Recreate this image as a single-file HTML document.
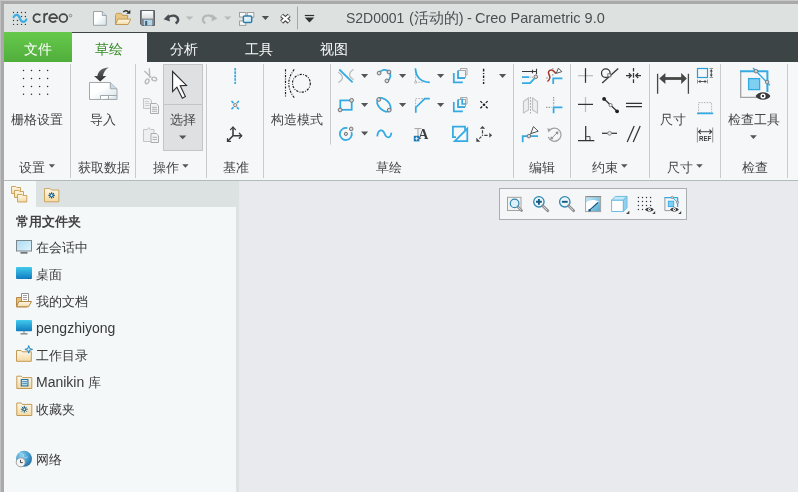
<!DOCTYPE html>
<html><head><meta charset="utf-8">
<style>
*{margin:0;padding:0;box-sizing:border-box}
html,body{width:798px;height:492px;overflow:hidden;background:#a9a9a9;font-family:"Liberation Sans",sans-serif;position:relative}
.a{position:absolute}
.t{position:absolute;white-space:nowrap;line-height:1;will-change:transform}
.tab{color:#fbfbfb;font-size:14px}
.rl{color:#454545;font-size:13px}
.li{color:#3a3a3a;font-size:13px}
svg{position:absolute;left:0;top:0}
</style></head><body>
<div class="a" style="left:0;top:0;width:798px;height:1px;background:#c8c8c8"></div>
<div class="a" style="left:0;top:0;width:1px;height:492px;background:#c0c0c0"></div>
<div class="a" style="left:4px;top:4px;width:794px;height:28px;background:#dde2e1"></div>
<div class="a" style="left:4px;top:32px;width:794px;height:30px;background:#3c4446"></div>
<div class="a" style="left:4px;top:32px;width:68px;height:30px;background:linear-gradient(#66c94b,#50ae3b)"></div>
<div class="a" style="left:72px;top:33px;width:75px;height:29px;background:#f6f7f9"></div>
<div class="a" style="left:4px;top:62px;width:794px;height:118px;background:#f6f7f9"></div>
<div class="a" style="left:4px;top:180px;width:794px;height:1px;background:#b2bbbb"></div>
<div class="a" style="left:4px;top:181px;width:232px;height:311px;background:#f5f8f9"></div>
<div class="a" style="left:4px;top:181px;width:232px;height:26px;background:#dce1e1"></div>
<div class="a" style="left:4px;top:181px;width:32px;height:26px;background:#f5f8f9"></div>
<div class="a" style="left:236px;top:181px;width:3px;height:311px;background:#dce1e1"></div>
<div class="a" style="left:239px;top:181px;width:559px;height:311px;background:#e8eaed"></div>
<div class="a" style="left:163px;top:64px;width:40px;height:87px;background:#dfe0e1;border:1px solid #c3c5c7"></div>
<div class="a" style="left:164px;top:104px;width:38px;height:1px;background:#c3c5c7"></div>
<div class="a" style="left:499px;top:188px;width:188px;height:32px;border:1px solid #a9aeb1;background:#f5f6f8"></div>
<!-- title text -->
<div class="t" style="left:346px;top:11px;font-size:14px;color:#4a4f50">S2D0001</div>
<div class="t" style="left:409px;top:11px;font-size:14.5px;color:#4a4f50">(活动的)</div>
<div class="t" style="left:467px;top:11px;font-size:14.5px;color:#4a4f50">-</div>
<div class="t" style="left:475px;top:11px;font-size:14.5px;color:#4a4f50">Creo Parametric 9.0</div>

<!-- tabs -->
<div class="t tab" style="left:24px;top:42px;color:#fff">文件</div>
<div class="t tab" style="left:95px;top:42px;color:#348a24">草绘</div>
<div class="t tab" style="left:170px;top:42px">分析</div>
<div class="t tab" style="left:245px;top:42px">工具</div>
<div class="t tab" style="left:320px;top:42px">视图</div>

<!-- ribbon labels -->
<div class="t rl" style="left:11px;top:113px">栅格设置</div>
<div class="t rl" style="left:90px;top:113px">导入</div>
<div class="t rl" style="left:170px;top:113px">选择</div>
<div class="t rl" style="left:271px;top:113px">构造模式</div>
<div class="t rl" style="left:660px;top:113px">尺寸</div>
<div class="t rl" style="left:728px;top:113px">检查工具</div>

<div class="t rl" style="left:19px;top:161px">设置</div>
<div class="t rl" style="left:78px;top:161px">获取数据</div>
<div class="t rl" style="left:153px;top:161px">操作</div>
<div class="t rl" style="left:223px;top:161px">基准</div>
<div class="t rl" style="left:376px;top:161px">草绘</div>
<div class="t rl" style="left:529px;top:161px">编辑</div>
<div class="t rl" style="left:592px;top:161px">约束</div>
<div class="t rl" style="left:667px;top:161px">尺寸</div>
<div class="t rl" style="left:742px;top:161px">检查</div>

<!-- list -->
<div class="t li" style="left:16px;top:215px;font-weight:bold;color:#444">常用文件夹</div>
<div class="t li" style="left:36px;top:241px">在会话中</div>
<div class="t li" style="left:36px;top:268px">桌面</div>
<div class="t li" style="left:36px;top:295px">我的文档</div>
<div class="t li" style="left:36px;top:321px;font-size:14px">pengzhiyong</div>
<div class="t li" style="left:36px;top:349px">工作目录</div>
<div class="t li" style="left:36px;top:375px"><span style="font-size:14px">Manikin</span> 库</div>
<div class="t li" style="left:36px;top:403px">收藏夹</div>
<div class="t li" style="left:36px;top:453px">网络</div>
<svg width="798" height="492" viewBox="0 0 798 492">
<defs>
<linearGradient id="gpaper" x1="0" y1="0" x2="1" y2="1"><stop offset="0.4" stop-color="#ffffff"/><stop offset="1" stop-color="#d3e3ea"/></linearGradient>
<linearGradient id="gfold" x1="0" y1="0" x2="0" y2="1"><stop offset="0" stop-color="#fff9ea"/><stop offset="1" stop-color="#f3d9a2"/></linearGradient>
<linearGradient id="garrow" x1="0" y1="0" x2="0" y2="1"><stop offset="0" stop-color="#666"/><stop offset="1" stop-color="#2e2e2e"/></linearGradient>
<linearGradient id="gscr" x1="0" y1="0" x2="1" y2="1"><stop offset="0" stop-color="#a8dcf4"/><stop offset="1" stop-color="#e2f4fb"/></linearGradient>
<linearGradient id="gdesk" x1="0" y1="0" x2="0" y2="1"><stop offset="0" stop-color="#41cbee"/><stop offset="1" stop-color="#117cc0"/></linearGradient>
<radialGradient id="gglobe" cx="0.35" cy="0.3" r="0.8"><stop offset="0" stop-color="#8fd3f0"/><stop offset="0.6" stop-color="#3d95c8"/><stop offset="1" stop-color="#24679a"/></radialGradient>
<linearGradient id="grep" x1="0" y1="0" x2="1" y2="1"><stop offset="0" stop-color="#9fd6ee"/><stop offset="1" stop-color="#1e7fb3"/></linearGradient>
</defs>

<!-- ===== title bar ===== -->
<g fill="#3a3a3a">
<circle cx="13.5" cy="12.5" r="0.7"/><circle cx="17.45" cy="12.5" r="0.7"/><circle cx="21.5" cy="12.5" r="0.7"/><circle cx="25.4" cy="12.5" r="0.7"/>
<circle cx="21.5" cy="16.5" r="0.7"/><circle cx="25.4" cy="16.5" r="0.7"/>
<circle cx="13.5" cy="20.5" r="0.7"/><circle cx="17.45" cy="20.5" r="0.7"/>
<circle cx="13.5" cy="24.4" r="0.7"/><circle cx="17.45" cy="24.4" r="0.7"/><circle cx="21.5" cy="24.4" r="0.7"/><circle cx="25.4" cy="24.4" r="0.7"/>
</g>
<path d="M13.6,17.2C14.8,14.2 18.4,13.6 20,18.6C21.6,23 25.2,22.4 26.4,19.4" fill="none" stroke="#3aade4" stroke-width="2.2" stroke-linecap="round"/>
<g fill="none" stroke="#474747" stroke-width="1.75">
<path d="M40.4,15.4A4,4 0 1 0 40.4,20.7"/>
<path d="M44.2,13.2V22.9M44.2,17.6C44.2,14.9 45.8,13.7 48,13.7"/>
<path d="M49.2,18.05H57.1A3.95,3.95 0 1 0 56.2,20.6"/>
<circle cx="63.35" cy="18.05" r="3.95"/>
</g>
<circle cx="70.5" cy="15.6" r="1.3" fill="none" stroke="#777" stroke-width="0.8"/>

<!-- new -->
<path d="M93.5,11.5H102.3L106.3,15.5V25.3H93.5Z" fill="url(#gpaper)" stroke="#9ea3a6"/>
<path d="M102.3,11.5V15.5H106.3" fill="#cfe2ec" stroke="#9ea3a6"/>
<!-- open -->
<path d="M115.5,24.5V15.5C115.5,13.8 116.3,13.3 117.5,13.3H120.5C121.5,13.3 122,14 122.3,15.4H127.6V24.5Z" fill="#e9c681" stroke="#c29a55"/>
<path d="M117.9,19.1H130.8L128.1,24.5H115.5Z" fill="url(#gfold)" stroke="#c29a55"/>
<path d="M123.2,12C124.6,10.6 126.6,10.4 128.4,11.8" fill="none" stroke="#2f2f2f" stroke-width="1.6"/>
<path d="M126.3,13.7H130.3V9.7Z" fill="#2f2f2f"/>
<!-- save -->
<linearGradient id="gsave" x1="0" y1="0" x2="0" y2="1"><stop offset="0" stop-color="#ffffff"/><stop offset="1" stop-color="#d9dcdd"/></linearGradient>
<path d="M140.5,10.5H154.5V25.5H142L140.5,24Z" fill="#80868a" stroke="#5d6367"/>
<rect x="142" y="11" width="11" height="7.6" fill="url(#gsave)"/>
<rect x="143.8" y="19.8" width="8.4" height="5.7" fill="#aed6ec"/>
<rect x="145.2" y="21" width="2" height="4.5" fill="#4e5961"/>
<!-- undo -->
<path d="M167.5,17.8C170.5,14.8 176.8,14.6 178,18.8C178.6,21 177.3,22.4 175.6,23.4" fill="none" stroke="#474d50" stroke-width="2.4"/>
<path d="M163.6,19.2L168.6,14.2L170,21.4Z" fill="#474d50"/>
<path d="M185.8,16.4H193.3L189.55,20Z" fill="#b6baba"/>
<!-- redo -->
<path d="M213.5,17.6C210.5,14.8 204.2,14.4 203,18.6C202.4,20.8 203.7,22.4 205.4,23.4" fill="none" stroke="#b4b8b9" stroke-width="2.2"/>
<path d="M217.4,18.6L212,14.3L211.6,21.6Z" fill="#b4b8b9"/>
<path d="M224,16.4H231.5L227.75,20Z" fill="#b6baba"/>
<!-- windows -->
<linearGradient id="gwin" x1="0" y1="0" x2="1" y2="1"><stop offset="0" stop-color="#ffffff"/><stop offset="1" stop-color="#bfe2f3"/></linearGradient>
<g fill="#f7f7f7" stroke="#a0a0a0">
<rect x="239.5" y="12.5" width="6.3" height="4.5"/>
<rect x="247.3" y="12.5" width="6.5" height="4.8"/>
<rect x="239.5" y="21" width="6.3" height="4.4"/>
</g>
<rect x="243.4" y="15.9" width="8.3" height="6.6" rx="1.3" fill="url(#gwin)" stroke="#2f7ea6" stroke-width="1.5"/>
<path d="M261.8,15.9H269L265.4,19.9Z" fill="#505050"/>
<!-- close x -->
<path d="M281.6,15.4L289.2,22M289.2,15.4L281.6,22" stroke="#444" stroke-width="4.4"/>
<path d="M281.9,15.7L288.9,21.7M288.9,15.7L281.9,21.7" stroke="#fff" stroke-width="2.2"/>
<path d="M297.5,6.5V29.5" stroke="#a3a8a9"/>
<path d="M304.8,15.5H314.2" stroke="#303030" stroke-width="1.2"/>
<path d="M304.8,17.6H314.2L309.5,22.4Z" fill="#303030"/>
<!-- ===== ribbon separators ===== -->
<g stroke="#c8cccd" stroke-width="1">
<path d="M70.5,64V178M135.5,64V178M206.5,64V178M263.5,64V178M330.5,64V144.5M513.5,64V178M570.5,64V178M649.5,64V178M720.5,64V178M787.5,64V178"/>
</g>

<!-- grid dots -->
<g fill="#2c2c2c">
<circle cx="23.5" cy="70.6" r="0.75"/><circle cx="31.5" cy="70.6" r="0.75"/><circle cx="39.6" cy="70.6" r="0.75"/><circle cx="47.6" cy="70.6" r="0.75"/>
<circle cx="23.5" cy="78.5" r="0.75"/><circle cx="31.5" cy="78.5" r="0.75"/><circle cx="39.6" cy="78.5" r="0.75"/><circle cx="47.6" cy="78.5" r="0.75"/>
<circle cx="23.5" cy="86.5" r="0.75"/><circle cx="31.5" cy="86.5" r="0.75"/><circle cx="39.6" cy="86.5" r="0.75"/><circle cx="47.6" cy="86.5" r="0.75"/>
<circle cx="23.5" cy="94.3" r="0.75"/><circle cx="31.5" cy="94.3" r="0.75"/><circle cx="39.6" cy="94.3" r="0.75"/><circle cx="47.6" cy="94.3" r="0.75"/>
</g>

<!-- import -->
<path d="M89.5,82.5H110.3L117,88.8V99.5H89.5Z" fill="url(#gpaper)" stroke="#a3a8aa"/>
<path d="M110.3,82.5V88.8H117" fill="#c9dde8" stroke="#a3a8aa"/>
<path d="M100.5,99.5V95.5H117M108.5,95.5V99.5" fill="#fff" stroke="#a3a8aa"/>
<path d="M108.8,67.6C102.8,67.8 98.2,70.8 97.4,76H94L100.2,81.6L106.3,76H102.9C103.6,72.2 105.6,69.4 108.8,67.6Z" fill="url(#garrow)"/>

<!-- scissors / copy / paste -->
<g fill="none" stroke="#b6babb" stroke-width="1.4">
<path d="M149.3,68.2L149.8,77.6M144.4,71L151.2,77.4"/>
<ellipse cx="147.2" cy="81.3" rx="1.7" ry="2.5" transform="rotate(25 147.2 81.3)"/>
<ellipse cx="154.3" cy="79" rx="2.5" ry="1.7" transform="rotate(20 154.3 79)"/>
</g>
<g stroke-width="1">
<path d="M143.5,98.5H149.5L151.5,100.5V108.5H143.5Z" fill="#eeefef" stroke="#c3c6c7"/>
<path d="M145,101.5H149M145,103.5H149.5M145,105.5H149.5" stroke="#cfd2d3"/>
<path d="M150.5,103.5H156.3L158.5,105.7V113.5H150.5Z" fill="#f2f3f3" stroke="#a9adae"/>
<path d="M152,107.3H157M152,109.3H157M152,111.3H157" stroke="#b1b5b6"/>
<path d="M143.5,129.5H147.3L148.8,127.5L150.3,129.5H154V141.5H143.5Z" fill="#eeefef" stroke="#c3c6c7"/>
<path d="M151,133.5H156.3L158.5,135.7V142.5H151Z" fill="#f2f3f3" stroke="#a9adae"/>
<path d="M152.5,137.3H157M152.5,139.5H157" stroke="#b1b5b6"/>
</g>

<!-- cursor -->
<path d="M172.6,71.5V91.6L176.9,87.2L182.3,98.2L185.4,96.4L180.2,85.8L186.5,85.4Z" fill="#fff" stroke="#2e2e2e" stroke-width="1.15" stroke-linejoin="miter"/>
<path d="M179,135.4H186.4L182.7,139.3Z" fill="#555"/>

<!-- group label triangles -->
<g fill="#555">
<path d="M48.8,164.3H55L51.9,167.8Z"/>
<path d="M182.2,164.3H188.6L185.4,167.8Z"/>
<path d="M621,164.3H627.6L624.3,167.8Z"/>
<path d="M696.2,164.3H702.8L699.5,167.8Z"/>
<path d="M750,135.2H756.8L753.4,138.9Z"/>
</g>

<!-- datum -->
<path d="M235.2,67.9V84.1" stroke="#33aae2" stroke-width="1.7" stroke-dasharray="2.6 0.85"/>
<path d="M231.5,101L233.6,103.1M238.9,101L236.8,103.1M231.5,109.2L233.6,107.1M238.9,109.2L236.8,107.1" stroke="#33aae2" stroke-width="1.6"/>
<circle cx="235.2" cy="105.1" r="1.6" fill="#e5e5e5" stroke="#777" stroke-width="0.9"/>
<g stroke="#3d3d3d" stroke-width="1.6" fill="none" stroke-linecap="round" stroke-linejoin="round">
<path d="M233,135.7V127.3M233,135.7H241.4M233,135.7L227.6,141.2"/>
<path d="M230.5,129.6L233,127.1L235.5,129.6M239.3,133.2L241.7,135.7L239.3,138.2M227.5,138.6V141.4H230.5" stroke-width="1.3"/>
</g>
<!-- construction mode -->
<g fill="none" stroke="#1e1e1e" stroke-width="1.15" stroke-dasharray="2.2 1.3 0.9 1.3">
<path d="M285.5,69.3V97.6"/>
<path d="M294.2,69.4Q283.4,83.5 294.2,97.6"/>
<circle cx="301.4" cy="83.3" r="8.9"/>
</g>
<!-- ===== sketch group ===== -->
<g fill="#555">
<path d="M361,73.9H368.2L364.6,77.9Z"/><path d="M399,73.9H406.2L402.6,77.9Z"/><path d="M437,73.9H444.2L440.6,77.9Z"/><path d="M499,73.9H506.2L502.6,77.9Z"/>
<path d="M361,103.1H368.2L364.6,107.1Z"/><path d="M399,103.1H406.2L402.6,107.1Z"/><path d="M437,103.1H444.2L440.6,107.1Z"/>
<path d="M361,131.6H368.2L364.6,135.6Z"/>
</g>
<!-- line -->
<path d="M338.3,72.2Q346.5,77.5 338.3,82.6M353.6,69.2Q345.6,74.5 353.6,79.8" fill="none" stroke="#b9b9b9" stroke-width="1.2"/>
<path d="M339.3,69.5L352.6,82.4" stroke="#33aae2" stroke-width="1.75"/>
<!-- 3pt arc -->
<path d="M379.3,73A5.9,5.9 0 1 1 387.2,81" fill="none" stroke="#33aae2" stroke-width="1.75"/>
<g fill="#d9d9d9" stroke="#666" stroke-width="0.9">
<circle cx="379.1" cy="73.1" r="1.9"/><circle cx="389" cy="72" r="1.9"/><circle cx="386.9" cy="80.9" r="1.9"/>
</g>
<!-- rectangle -->
<rect x="340.3" y="100.4" width="11.4" height="9.4" fill="none" stroke="#33aae2" stroke-width="1.75"/>
<!-- ellipse -->
<ellipse cx="383.9" cy="104.85" rx="8.3" ry="5.1" transform="rotate(45 383.9 104.8)" fill="none" stroke="#33aae2" stroke-width="1.75"/>
<!-- circle -->
<path d="M351.5,132A6,6 0 1 1 347.4,128.2" fill="none" stroke="#33aae2" stroke-width="1.75"/>
<g fill="#d9d9d9" stroke="#666" stroke-width="0.9">
<circle cx="351.6" cy="100.3" r="1.9"/><circle cx="340.1" cy="109.9" r="1.9"/>
<circle cx="378.8" cy="99.5" r="1.9"/><circle cx="389.2" cy="110.1" r="1.9"/>
<circle cx="345.9" cy="133.9" r="1.6"/><circle cx="351.2" cy="128.9" r="1.8"/>
</g>
<!-- spline -->
<path d="M377.2,136.3C378.2,129.3 382.6,128.6 384.5,133.5C386.4,138.4 390.6,139 391.4,132.6" fill="none" stroke="#33aae2" stroke-width="1.75"/>
<!-- fillet -->
<path d="M415.6,71V82.3H423" fill="none" stroke="#a9a9a9" stroke-width="0.9" stroke-dasharray="1.6 1.2"/>
<circle cx="415.6" cy="82.3" r="1" fill="#fff" stroke="#999" stroke-width="0.7"/>
<path d="M415.4,68.3Q416.2,82 429.8,82.3" fill="none" stroke="#33aae2" stroke-width="1.75"/>
<!-- chamfer -->
<path d="M415.6,107V98.6H424.5" fill="none" stroke="#a9a9a9" stroke-width="0.9" stroke-dasharray="1.6 1.2"/>
<path d="M415.8,112.8V107.5L424.8,98.6H429.8" fill="none" stroke="#33aae2" stroke-width="1.75"/>
<!-- offset -->
<g fill="none" stroke="#a9a9a9" stroke-width="1">
<path d="M460.5,70.5V68.5H467V75H465.5"/><rect x="458.5" y="70.5" width="7" height="7"/>
</g>
<path d="M453.8,73V82.3H462.8M458,70.6V78.1H465" fill="none" stroke="#33aae2" stroke-width="1.75"/>
<!-- thicken -->
<g fill="none" stroke="#a9a9a9" stroke-width="1">
<path d="M460.5,99.5V97.5H467V104H465.5"/><rect x="458.5" y="99.5" width="7" height="7"/>
</g>
<path d="M453.8,102V111.3H462.8M458,99.6V107.1H465M462.2,98.5V104H466" fill="none" stroke="#33aae2" stroke-width="1.7"/>
<!-- text -->
<path d="M414.5,128.6H421.5M418,128.6V136.5" stroke="#9a9a9a" stroke-width="0.9"/>
<text x="418.3" y="139" font-family="Liberation Serif" font-weight="bold" font-size="14" fill="#3e3e3e">A</text>
<rect x="413.8" y="135.8" width="5.6" height="5.6" fill="#1f7bb5"/>
<path d="M414.8,138.6H418.4M416.6,136.8V140.4" stroke="#fff" stroke-width="0.8"/>
<!-- palette / square -->
<path d="M456,137.2H452.9V126.7H465V130" fill="none" stroke="#33aae2" stroke-width="1.75"/>
<path d="M454.8,141.1L467.3,128.6V141.1Z" fill="none" stroke="#33aae2" stroke-width="1.75" stroke-linejoin="miter"/>
<!-- coord sys -->
<g stroke="#444" stroke-width="1.2" fill="none">
<path d="M482.5,130.2V133.6M484.3,135.3H487.6M481.3,136.6L479.3,138.6"/>
</g>
<g fill="#444">
<circle cx="482.5" cy="135.3" r="0.7"/>
<path d="M482.5,126L479.8,128.8H485.2Z"/>
<path d="M492.1,135.3L489.3,132.8V137.8Z"/>
<path d="M476.3,141.7V137.7L480.3,141.7Z"/>
</g>
<!-- centerline -->
<path d="M483.6,68.8V84" stroke="#1e1e1e" stroke-width="1.4" stroke-dasharray="2.6 1.5 1 1.5"/>
<!-- point -->
<path d="M480.4,101.1L482.2,102.9M487.6,101.1L485.8,102.9M480.4,108.3L482.2,106.5M487.6,108.3L485.8,106.5" stroke="#1e1e1e" stroke-width="1.3"/>
<circle cx="484" cy="104.7" r="1.3" fill="#1e1e1e"/>
<!-- ===== edit group ===== -->
<!-- trim -->
<path d="M522,71.5H536.5M536.5,68.8V74.2M532.5,69.8V73.2" stroke="#3a3a3a" stroke-width="1.1"/>
<path d="M522,77.2H529M522,83H530L534.6,78.4" fill="none" stroke="#33aae2" stroke-width="1.75"/>
<path d="M529.5,77.2H533" stroke="#999" stroke-width="1" stroke-dasharray="1.2 1"/>
<circle cx="535.8" cy="76.8" r="1.8" fill="#d9d9d9" stroke="#666" stroke-width="0.9"/>
<!-- divide -->
<path d="M547.4,81.5C550,79.5 550.5,77 549,74.5C547.5,72 549,70 551.5,70C553.5,70 554.5,72.5 556,73.5" fill="none" stroke="#a8382c" stroke-width="1.5"/>
<path d="M556.2,73.4L558.4,68.2L561.8,71.6Z" fill="#fff" stroke="#444" stroke-width="0.9" stroke-linejoin="round"/>
<path d="M553.2,84V78.4H562.4" fill="none" stroke="#33aae2" stroke-width="1.75"/>
<g fill="#aaa"><rect x="552" y="68.1" width="1.5" height="1.5"/><rect x="546.2" y="77.3" width="1.5" height="1.5"/><rect x="552" y="74.2" width="1.5" height="1.5"/></g>
<!-- mirror -->
<g fill="#eeefef" stroke="#c1c4c5" stroke-width="1.2">
<path d="M523.5,101.5L528.5,98V110L523.5,113Z"/>
<path d="M532.5,98L537.5,101.5V113L532.5,110Z"/>
</g>
<path d="M530.5,97V113.5" stroke="#a0a0a0" stroke-width="0.9" stroke-dasharray="1.8 1.2"/>
<!-- corner -->
<path d="M553.6,97V105.6M546,107.4H551.6" stroke="#a0a0a0" stroke-width="1.3" stroke-dasharray="1.5 1.1"/>
<path d="M553.6,113.2V107.4H562.4" fill="none" stroke="#33aae2" stroke-width="1.75"/>
<!-- rotate-resize -->
<path d="M522.7,142.2V136.1H527M530.8,136.1H538" fill="none" stroke="#33aae2" stroke-width="1.75"/>
<path d="M529,136L531,133.2" stroke="#555" stroke-width="0.9"/>
<path d="M530.8,133.6L533.4,126.6L538.2,131.2Z" fill="#fff" stroke="#3a3a3a" stroke-width="0.9" stroke-linejoin="round"/>
<circle cx="528.9" cy="136.1" r="1.8" fill="#d9d9d9" stroke="#666" stroke-width="0.9"/>
<!-- rotate -->
<path d="M549.6,130.2A6.6,6.6 0 1 1 548.3,137" fill="none" stroke="#a0a0a0" stroke-width="1.2"/>
<path d="M547.3,128.3L551.6,129.3L548.4,132.6Z" fill="#a0a0a0"/>
<path d="M551.2,138.7L557.6,132.3" stroke="#8f8f8f" stroke-width="1"/>
<path d="M550.3,139.6L550.9,136.3L553.6,139Z M558.5,131.4L557.9,134.7L555.2,132Z" fill="#8f8f8f"/>

<!-- ===== constraints ===== -->
<g stroke-width="1.25" fill="none">
<path d="M578,75.7H593" stroke="#bdbdbd"/>
<path d="M585.5,68.2V82.8" stroke="#333"/>
<path d="M585.5,97V112" stroke="#bdbdbd"/>
<path d="M578,104.4H593" stroke="#333"/>
<circle cx="605.8" cy="73.2" r="4.3" stroke="#333"/>
<path d="M602.2,83L618.2,68.5" stroke="#333"/>
<path d="M633.5,68.1V71.6M633.5,73V77.8M633.5,79.2V82.9" stroke="#333"/>
<path d="M626,75.6H630.5M641,75.6H636.3" stroke="#333"/>
<path d="M604.2,99L617,111.2" stroke="#333"/>
<path d="M626,103.3H642M626,106.6H642" stroke="#333"/>
<path d="M585.7,126V140.6M578,140.6H594.3" stroke="#333"/>
<path d="M586.2,136.6H590V140.3" stroke="#333" stroke-width="0.9"/>
<path d="M602,133.3H617" stroke="#333"/>
<path d="M627.2,142L634.2,126M633.2,142L640.2,126" stroke="#333"/>
</g>
<path d="M628.8,73.2L631.2,75.6L628.8,78M638.2,73.2L635.8,75.6L638.2,78" fill="none" stroke="#333" stroke-width="1.3"/>
<rect x="607.8" y="73.8" width="3" height="3" fill="#eee" stroke="#666" stroke-width="0.8"/>
<circle cx="604.1" cy="98.9" r="1.9" fill="#1f1f1f"/><circle cx="617.1" cy="111.3" r="1.9" fill="#1f1f1f"/>
<circle cx="610.6" cy="105.1" r="1.6" fill="#f0f0f0" stroke="#666" stroke-width="0.8"/>
<circle cx="609.6" cy="133.3" r="1.9" fill="#e6e6e6" stroke="#777" stroke-width="0.8"/>

<!-- ===== dimension ===== -->
<path d="M657.6,73.8V93.8M688.4,73.8V93.8" stroke="#474747" stroke-width="1.3"/>
<path d="M664.5,78.5H682" stroke="#474747" stroke-width="2.8"/>
<path d="M659.2,78.5L665.4,73.1V84Z M686.9,78.5L681.2,73.1V84Z" fill="#474747"/>
<rect x="697.5" y="68.5" width="10" height="9" fill="none" stroke="#2a9fd6" stroke-width="1.2"/>
<path d="M709.5,68.5H713M709.5,77.5H713M697.5,79.5V83.5M707.5,79.5V83.5" stroke="#888" stroke-width="0.9"/>
<path d="M711.3,70V76M699,81.5H706" stroke="#444" stroke-width="0.9"/>
<path d="M711.3,68.9L709.8,71.4H712.8ZM711.3,77.1L709.8,74.6H712.8ZM698,81.5L700.5,80V83ZM707,81.5L704.5,80V83Z" fill="#444"/>
<rect x="698.6" y="102.6" width="13" height="10" fill="none" stroke="#b0b0b0" stroke-width="0.9" stroke-dasharray="1.6 1.1"/>
<path d="M697,113.4H713.2" stroke="#33aae2" stroke-width="1.7"/>
<path d="M697.4,127.5V142.5M712.7,127.5V142.5" stroke="#8a8a8a" stroke-width="0.9"/>
<path d="M699,131.7H711" stroke="#333" stroke-width="0.9"/>
<path d="M700.8,129.6L698.6,131.7L700.8,133.8M709.4,129.6L711.6,131.7L709.4,133.8" fill="none" stroke="#333" stroke-width="1.1"/>
<text x="699" y="141.3" font-family="Liberation Sans" font-weight="bold" font-size="7.2" fill="#3a3a3a" textLength="12.2" lengthAdjust="spacingAndGlyphs">REF</text>

<!-- ===== inspect ===== -->
<path d="M740.7,71.2V97.3H757" fill="none" stroke="#a3a3a3" stroke-width="1.3"/>
<path d="M740,71.3H767.4M767.4,70.5V92" fill="none" stroke="#33aae2" stroke-width="2"/>
<rect x="748.6" y="78.6" width="11" height="11" fill="#7fcff3" stroke="#33aae2" stroke-width="1.3"/>
<path d="M753,68L769.8,85.2" stroke="#33aae2" stroke-width="1.5"/>
<circle cx="756" cy="71.2" r="1.8" fill="#d0d0d0" stroke="#777" stroke-width="0.9"/>
<circle cx="767.1" cy="82.1" r="1.8" fill="#d0d0d0" stroke="#777" stroke-width="0.9"/>
<path d="M755.6,96C758.2,90.9 767.8,90.9 770.4,96C767.8,101.1 758.2,101.1 755.6,96Z" fill="#3b3b3b"/>
<circle cx="763" cy="96" r="2.6" fill="#fff"/><circle cx="763" cy="96" r="1.1" fill="#111"/>
<!-- ===== view toolbar ===== -->
<rect x="507.5" y="197.3" width="13.5" height="13.2" fill="#f3f3f3" stroke="#a2a2a2"/>
<circle cx="514.6" cy="203.4" r="4.3" fill="#def1fa" stroke="#2f86b0" stroke-width="1.2"/>
<path d="M517.8,206.7L521.6,210.6" stroke="#8a8f92" stroke-width="2.6" stroke-linecap="round"/><path d="M518.3,207.2L521.2,210.1" stroke="#e2e4e5" stroke-width="0.9"/>
<circle cx="538.9" cy="201.8" r="5.2" fill="#e9f6fc" stroke="#2f86b0" stroke-width="1.3"/>
<path d="M536,201.8H541.8M538.9,198.9V204.7" stroke="#145a84" stroke-width="1.9"/>
<path d="M542.7,205.8L547.8,210.8" stroke="#8a8f92" stroke-width="2.7" stroke-linecap="round"/><path d="M543.3,206.4L547.3,210.3" stroke="#e2e4e5" stroke-width="0.9"/>
<circle cx="564.8" cy="201.8" r="5.2" fill="#e9f6fc" stroke="#2f86b0" stroke-width="1.3"/>
<path d="M561.9,201.8H567.7" stroke="#145a84" stroke-width="1.9"/>
<path d="M568.6,205.8L573.7,210.8" stroke="#8a8f92" stroke-width="2.7" stroke-linecap="round"/><path d="M569.2,206.4L573.2,210.3" stroke="#e2e4e5" stroke-width="0.9"/>
<!-- repaint -->
<linearGradient id="grep2" x1="0" y1="0" x2="1" y2="1"><stop offset="0" stop-color="#c9ecf8"/><stop offset="1" stop-color="#4fa9d0"/></linearGradient>
<rect x="585.6" y="196.6" width="15" height="15" fill="url(#grep2)" stroke="#a5a5a5"/>
<path d="M586.1,196.6H601.1" stroke="#858585" stroke-width="1"/>
<path d="M586.1,211.1V202.2C589.5,199.6 595,199.4 598.6,201.6L590.5,211.1Z" fill="#fff"/>
<path d="M589.3,210.6L598,202.6" stroke="#1b5e86" stroke-width="1.3"/>
<circle cx="589.6" cy="210.2" r="1.3" fill="#1b5e86"/>
<!-- cube -->
<path d="M611.6,200.1H623.4V211.5H611.6Z" fill="#fff" stroke="#6cbde3"/>
<path d="M611.6,200.1L615.4,196.4H627V196.5L623.4,200.1Z" fill="#c6e8f6" stroke="#6cbde3"/>
<path d="M623.4,200.1L627,196.4V207.8L623.4,211.5Z" fill="#90d1ee" stroke="#6cbde3"/>
<path d="M626,214H629.3V210.7Z" fill="#444"/>
<!-- grid display -->
<g fill="#333">
<circle cx="638.4" cy="197.5" r="0.7"/><circle cx="642.5" cy="197.5" r="0.7"/><circle cx="646.5" cy="197.5" r="0.7"/><circle cx="650.6" cy="197.5" r="0.7"/>
<circle cx="638.4" cy="201.5" r="0.7"/><circle cx="642.5" cy="201.5" r="0.7"/><circle cx="646.5" cy="201.5" r="0.7"/><circle cx="650.6" cy="201.5" r="0.7"/>
<circle cx="638.4" cy="205.5" r="0.7"/><circle cx="642.5" cy="205.5" r="0.7"/><circle cx="646.5" cy="205.5" r="0.7"/><circle cx="650.6" cy="205.5" r="0.7"/>
<circle cx="638.4" cy="209.5" r="0.7"/><circle cx="642.5" cy="209.5" r="0.7"/>
</g>
<path d="M645,209.5C647,206.8 651.8,206.8 653.8,209.5C651.8,212.2 647,212.2 645,209.5Z" fill="#3b3b3b"/>
<circle cx="649.4" cy="209.5" r="1.5" fill="#fff"/><circle cx="649.4" cy="209.5" r="0.6" fill="#222"/>
<path d="M652.2,214H655.2V211Z" fill="#444"/>
<!-- sketch display -->
<path d="M664.9,197.5V210.6H670.5" fill="none" stroke="#9a9a9a" stroke-width="1"/>
<path d="M664.4,197.6H677.6M677.6,197.2V207" fill="none" stroke="#33aae2" stroke-width="1.3"/>
<rect x="668.3" y="201.2" width="5.4" height="5.4" fill="#7fcff3" stroke="#33aae2" stroke-width="0.9"/>
<path d="M672.3,197.3L677.5,202.3" stroke="#33aae2" stroke-width="1"/>
<circle cx="672.3" cy="197.4" r="1.2" fill="#d0d0d0" stroke="#777" stroke-width="0.6"/>
<circle cx="677.5" cy="202.3" r="1.2" fill="#d0d0d0" stroke="#777" stroke-width="0.6"/>
<path d="M670,209.5C672,206.8 676.8,206.8 678.8,209.5C676.8,212.2 672,212.2 670,209.5Z" fill="#3b3b3b"/>
<circle cx="674.4" cy="209.5" r="1.5" fill="#fff"/><circle cx="674.4" cy="209.5" r="0.6" fill="#222"/>
<path d="M678.2,214H681.2V211Z" fill="#444"/>

<!-- ===== panel tab icons ===== -->
<g stroke="#cda45d" stroke-width="1" fill="url(#gfold)">
<path d="M11.5,188V186.5H15.8L16.8,187.5H20.5V193.5H11.5Z"/>
<path d="M14.5,192V190.5H18.8L19.8,191.5H23.5V197.5H14.5Z"/>
<path d="M17.5,196V194.5H21.8L22.8,195.5H26.8V202H17.5Z"/>
<path d="M44.5,191V188.6H50L51.3,190H58.8V201.8H44.5Z"/>
</g>
<g stroke="#0e5a86" stroke-width="1.1">
<path d="M51.6,192.2V198.6M48.4,195.4H54.8M49.3,193.1L53.9,197.7M53.9,193.1L49.3,197.7"/>
</g>
<circle cx="51.6" cy="195.4" r="1.4" fill="#fff" stroke="#0e5a86" stroke-width="0.9"/>

<!-- ===== list icons ===== -->
<!-- monitor -->
<rect x="16.5" y="240.5" width="15" height="10.5" fill="url(#gscr)" stroke="#7c878d"/>
<path d="M20.5,252.8H27.5" stroke="#6f7477" stroke-width="1.8"/>
<!-- desktop -->
<rect x="16" y="267" width="16" height="12" rx="1" fill="url(#gdesk)"/>
<path d="M28,278.5H32" stroke="#0b5f95" stroke-width="1" stroke-dasharray="1 1"/>
<!-- my docs -->
<path d="M16.5,297.5H21L22,298.5H27V306.8H16.5Z" fill="#e8c27c" stroke="#b58a48"/>
<path d="M21.5,293.5H28.5V302H21.5Z" fill="#fff" stroke="#909090"/>
<path d="M23,295.5H27M23,297.5H27M23,299.5H27" stroke="#8a8a8a" stroke-width="0.8"/>
<path d="M18.8,301.5H31.5L28.5,306.8H16.5Z" fill="url(#gfold)" stroke="#b58a48"/>
<!-- blue monitor -->
<rect x="16" y="320" width="16" height="11.2" rx="0.8" fill="url(#gdesk)"/>
<path d="M20.5,333.8H27.5" stroke="#8e9396" stroke-width="1.6"/>
<path d="M24,331V333" stroke="#8e9396" stroke-width="1.2"/>
<!-- work dir -->
<path d="M16.5,361.3V350.5H21L22.2,351.8H31.3V361.3Z" fill="url(#gfold)" stroke="#c39a55"/>
<path d="M28.7,345.6L29.6,348.5L32.5,349.4L29.6,350.3L28.7,353.2L27.8,350.3L24.9,349.4L27.8,348.5Z" fill="#d2eefa" stroke="#1d86c0" stroke-width="1"/>
<!-- manikin -->
<path d="M16.8,388.5V376.2H21.3L22.5,377.6H31.8V388.5Z" fill="url(#gfold)" stroke="#c39a55"/>
<rect x="21.3" y="379.6" width="6.6" height="6.3" fill="#fff" stroke="#1a6ea1" stroke-width="1.1"/>
<path d="M22.2,381.8H27M22.2,383.8H27" stroke="#1a6ea1" stroke-width="1"/>
<!-- favorites -->
<path d="M16.8,415.5V403H21.3L22.5,404.4H31.8V415.5Z" fill="url(#gfold)" stroke="#c39a55"/>
<g stroke="#0e5a86" stroke-width="1"><path d="M24.3,405.8V412.6M20.9,409.2H27.7M21.9,406.8L26.7,411.6M26.7,406.8L21.9,411.6"/></g>
<circle cx="24.3" cy="409.2" r="1.3" fill="#fff" stroke="#0e5a86" stroke-width="0.9"/>
<!-- network -->
<circle cx="24" cy="458.8" r="8" fill="url(#gglobe)"/>
<path d="M19,453.5C21,452.5 24,454 23.5,456C23,458 26.5,458.5 28,456.5" fill="none" stroke="#b9e3f5" stroke-width="1" opacity="0.7"/>
<circle cx="20.7" cy="462.3" r="4.5" fill="#f4f4f4" stroke="#9a9a9a" stroke-width="0.9"/>
<path d="M20.5,459.8V462.6H22.8" fill="none" stroke="#333" stroke-width="0.9"/>
</svg>
</body></html>
